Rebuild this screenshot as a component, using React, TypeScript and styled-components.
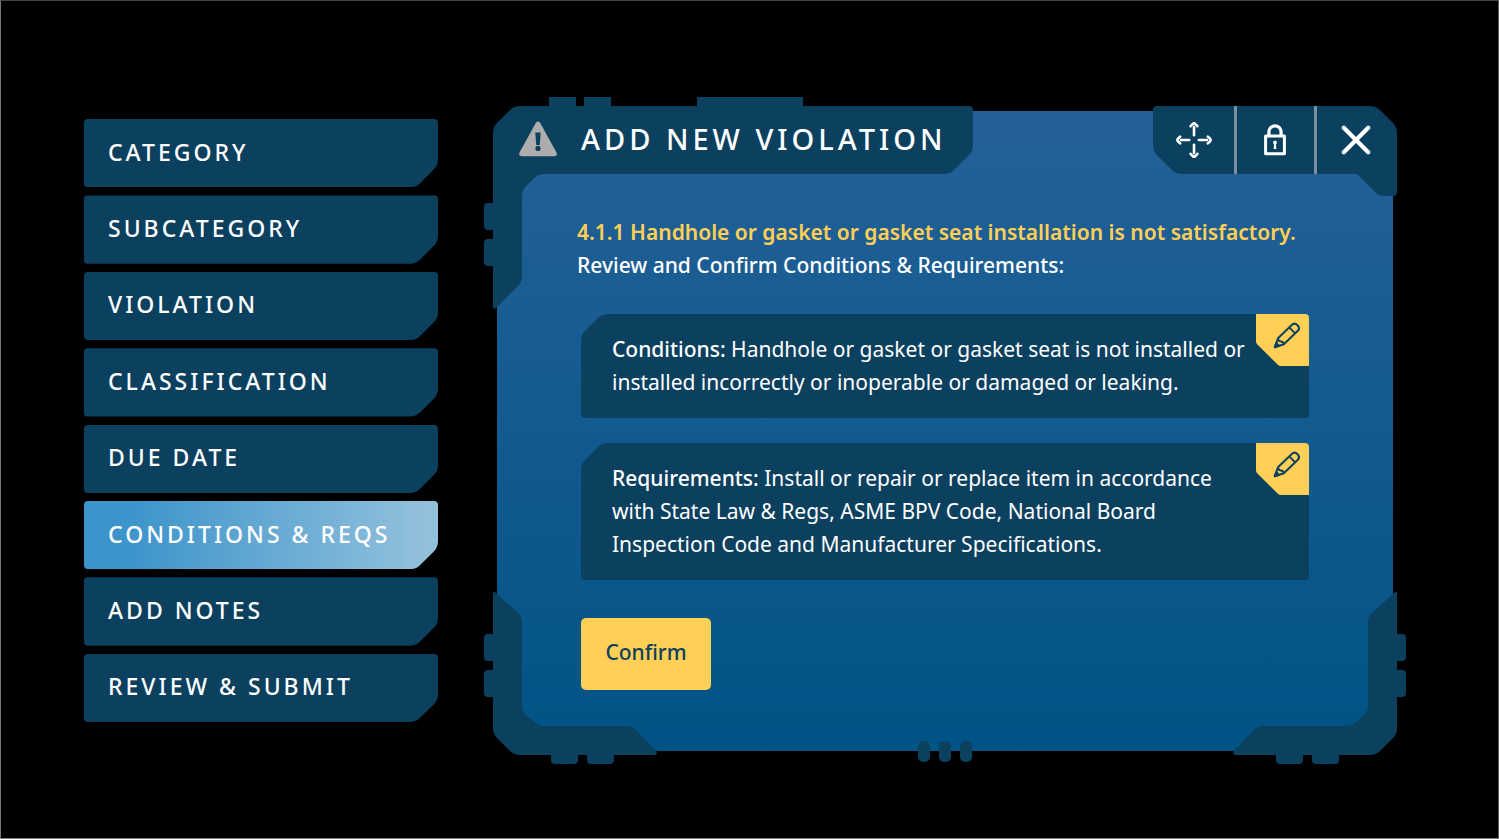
import React from "react";
import styled, { createGlobalStyle, css } from "styled-components";

const NAVY = "#0b405f";
const YELLOW = "#ffcf56";
const FONT = '"Noto Sans", "Open Sans", sans-serif';

/* Clip outlines: each corner is square or bevelled, bevels have softened ends. */
type Bevels = { tl?: number; tr?: number; br?: number; bl?: number; soft?: number };

const fromNear = (n: number) => `${n.toFixed(1)}px`;
const fromFar = (n: number) => `calc(100% - ${n.toFixed(1)}px)`;

function bevelPoints(size: number, soft: number): [number, number][] {
  const s = soft * 0.7;
  const curve = (a: number[], b: number[], c: number[]) =>
    [0, 0.2, 0.4, 0.6, 0.8, 1].map((t): [number, number] => [
      (1 - t) * (1 - t) * a[0] + 2 * t * (1 - t) * b[0] + t * t * c[0],
      (1 - t) * (1 - t) * a[1] + 2 * t * (1 - t) * b[1] + t * t * c[1],
    ]);
  return [
    ...curve([0, size + soft], [0, size], [s, size - s]),
    ...curve([size - s, s], [size, 0], [size + soft, 0]),
  ];
}

function bevel({ tl = 0, tr = 0, br = 0, bl = 0, soft = 6 }: Bevels) {
  const pts = (n: number): [number, number][] => (n ? bevelPoints(n, soft) : [[0, 0]]);
  const list = [
    ...pts(tl).map(([x, y]) => `${fromNear(x)} ${fromNear(y)}`),
    ...pts(tr).reverse().map(([x, y]) => `${fromFar(x)} ${fromNear(y)}`),
    ...pts(br).map(([x, y]) => `${fromFar(x)} ${fromFar(y)}`),
    ...pts(bl).reverse().map(([x, y]) => `${fromNear(x)} ${fromFar(y)}`),
  ];
  return css`
    clip-path: polygon(${list.join(", ")});
  `;
}

const Global = createGlobalStyle`
  *, *::before, *::after { box-sizing: border-box; }
  body { margin: 0; background: #000; font-family: ${FONT}; color: #fff; }
  button { font: inherit; color: inherit; border: 0; padding: 0; cursor: pointer; }
  svg { display: block; }
`;

const Page = styled.div`
  min-height: 100vh;
  display: flex;
  align-items: flex-start;
  gap: 55px;
  padding: 105px 101px 83px 83px;
  border: 1px solid;
  border-color: #444 #5c5c5c #808080 #777;
`;

const Steps = styled.nav`
  flex: 0 0 354px;
  align-self: stretch;
  display: flex;
  flex-direction: column;
  gap: 8px;
  padding: 13px 0 33px;
`;

const Step = styled.button<{ $active?: boolean }>`
  flex: 1;
  min-height: 48px;
  padding: 0 24px 3px;
  text-align: left;
  white-space: nowrap;
  font-size: 23px;
  font-weight: 500;
  letter-spacing: 3px;
  border-radius: 4px;
  background: ${(p) =>
    p.$active ? "linear-gradient(90deg, #3c94cb 12%, #93c1dc 97%)" : NAVY};
  ${bevel({ br: 22 })}
`;

const Dialog = styled.section`
  position: relative;
  isolation: isolate;
  flex: 1;
  min-width: 0;

  &::before {
    content: "";
    position: absolute;
    z-index: -1;
    inset: 5px 4px 4px;
    background: linear-gradient(#246198, #005386);
    ${bevel({ tl: 24, tr: 24, br: 24, bl: 24 })}
  }
`;

const Header = styled.header`
  display: flex;
  justify-content: space-between;
  align-items: flex-start;
`;

const TitlePlate = styled.div`
  display: flex;
  align-items: center;
  gap: 24px;
  height: 68px;
  width: 480px;
  padding: 0 0 2px 26px;
  background: ${NAVY};
  border-radius: 0 4px 0 0;
  ${bevel({ tl: 21, br: 23 })}
`;

const Title = styled.h1`
  margin: 0;
  font-size: 29px;
  line-height: 40px;
  font-weight: 500;
  letter-spacing: 4px;
  white-space: nowrap;
`;

const Tools = styled.div`
  display: grid;
  grid-template-columns: 81px 80px 83px;
  height: 68px;
  background: ${NAVY};
  border-radius: 4px 0 0 0;
  ${bevel({ tr: 21, bl: 23 })}
`;

const Tool = styled.button`
  display: grid;
  place-items: center;
  background: none;

  & + & {
    padding-right: 2px;
    border-left: 3px solid #7890a0;
  }
`;

const Content = styled.div`
  padding: 42px 88px 65px 84px;
  font-size: 21px;
  line-height: 33px;
`;

const Code = styled.h2`
  margin: 0;
  font-size: 21px;
  font-weight: 600;
  color: ${YELLOW};
  white-space: nowrap;
`;

const Lead = styled.p`
  margin: 0;
  font-weight: 500;
`;

const Body = styled.div`
  padding: 32px 0 0 4px;
`;

const Cards = styled.div`
  display: grid;
  grid-template-columns: minmax(0, 1fr);
  gap: 25px;
  margin-bottom: 38px;
`;

const Card = styled.article`
  position: relative;
  padding: 19px 53px 19px 31px;
  background: ${NAVY};
  border-radius: 4px;
  ${bevel({ tl: 21 })}

  p {
    margin: 0;
    white-space: nowrap;
  }

  strong {
    font-weight: 500;
  }
`;

const Edit = styled.button`
  position: absolute;
  top: 0;
  right: 0;
  display: flex;
  justify-content: flex-end;
  align-items: flex-start;
  width: 53px;
  height: 52px;
  padding: 8px 9px 0 0;
  background: ${YELLOW};
  color: ${NAVY};
  border-radius: 0 4px 0 0;
  ${bevel({ bl: 23, soft: 2 })}
`;

const Confirm = styled.button`
  min-width: 130px;
  height: 72px;
  padding: 0 24px 4px;
  background: ${YELLOW};
  color: ${NAVY};
  font-weight: 500;
  border-radius: 5px;
`;

/* Frame ornaments hang over the dialog's corners and edges. */
const Ornament = styled.svg`
  position: absolute;
  pointer-events: none;
  fill: ${NAVY};
`;

const TopLeft = styled(Ornament)`
  left: -9px;
  top: -9px;
`;

const TopRight = styled(Ornament)`
  right: 0;
  top: 67px;
`;

const BottomCorner = styled(Ornament)<{ $side: "left" | "right" }>`
  bottom: -9px;
  ${(p) => p.$side}: -9px;
  ${(p) => p.$side === "right" && "transform: scaleX(-1);"}
`;

const Pills = styled.div`
  position: absolute;
  left: 0;
  right: 0;
  bottom: -7px;
  display: flex;
  justify-content: center;
  gap: 9px;

  i {
    width: 12px;
    height: 21px;
    border-radius: 5px;
    background: ${NAVY};
  }
`;

const WarningIcon = () => (
  <svg width="38" height="36" viewBox="0 0 38 36" aria-hidden="true">
    <path d="M16.9 1.8Q19-.9 21.1 1.8L37.5 31.6Q38.6 35 35.4 35.2H2.6Q-.6 35 .5 31.6Z" fill="#adadad" />
    <path d="M16.3 11.5h5.4l-.9 12.4h-3.6z" fill={NAVY} />
    <circle cx="19" cy="27.4" r="2.6" fill={NAVY} />
  </svg>
);

const MoveIcon = () => (
  <svg width="38" height="38" viewBox="-19 -19 38 38" fill="none" stroke="#fff" strokeWidth="2.6" strokeLinecap="round" strokeLinejoin="round" aria-hidden="true">
    {[0, 90, 180, 270].map((a) => (
      <path key={a} transform={`rotate(${a})`} d="M0-4.8V-13M-3.4-13.8L-1.2-16.2Q0-17.2 1.2-16.2L3.4-13.8" />
    ))}
  </svg>
);

const LockIcon = () => (
  <svg width="22" height="32" viewBox="0 0 22 32" fill="none" stroke="#fff" aria-hidden="true">
    <rect x="1.6" y="12" width="18.8" height="17.8" strokeWidth="3" strokeLinejoin="round" />
    <path d="M4.9 12V8a6.1 6.1 0 0 1 12.2 0v4" strokeWidth="3.2" />
    <path d="M11 16.6a2 2 0 0 1 1 3.7l.3 4.7H9.7l.3-4.7a2 2 0 0 1 1-3.7z" fill="#fff" stroke="none" />
  </svg>
);

const CloseIcon = () => (
  <svg width="30" height="30" viewBox="0 0 30 30" stroke="#fff" strokeWidth="4.2" strokeLinecap="round" aria-hidden="true">
    <path d="M2.8 2.8l24.4 24.4M27.2 2.8L2.8 27.2" />
  </svg>
);

const PencilIcon = () => (
  <svg width="27" height="27" viewBox="0 0 27 27" fill="none" stroke="currentColor" strokeWidth="2" strokeLinejoin="round" aria-hidden="true">
    <g transform="translate(1.8 25.2) rotate(-44)">
      <path d="M0 0L8.5-4.2H27.6Q31.6-4.2 31.6 0T27.6 4.2H8.5ZM8.5-4.2Q6.4-2 8.3 0T8.5 4.2M24.2-4.2V4.2" />
      <path d="M0 0L4-2V2Z" fill="currentColor" />
    </g>
  </svg>
);

const steps = [
  "CATEGORY",
  "SUBCATEGORY",
  "VIOLATION",
  "CLASSIFICATION",
  "DUE DATE",
  "CONDITIONS & REQS",
  "ADD NOTES",
  "REVIEW & SUBMIT",
];

const cornerArt = (
  <>
    <path d="M9 3Q9 0 12 3L34 23Q38 27 38 33V117Q38 121 41 124L50 132Q54 136 60 136H142Q148 136 152 140L172 161Q174 165 171 165H36Q30 165 26 161L13 148Q9 144 9 138Z" />
    <path d="M10 44H4Q0 44 0 48V67Q0 71 4 71H10ZM10 80H4Q0 80 0 84V103Q0 107 4 107H10Z" />
    <path d="M67 164V170Q67 174 71 174H90Q94 174 94 170V164ZM103 164V170Q103 174 107 174H126Q130 174 130 170V164Z" />
  </>
);

export default function App() {
  return (
    <>
      <Global />
      <Page>
        <Steps aria-label="Violation steps">
          {steps.map((s) => {
            const active = s === "CONDITIONS & REQS";
            return (
              <Step key={s} type="button" $active={active} aria-current={active ? "step" : undefined}>
                {s}
              </Step>
            );
          })}
        </Steps>

        <Dialog role="dialog" aria-labelledby="dialog-title">
          <TopLeft width="320" height="214" aria-hidden="true">
            <path d="M65 0H92V10H65ZM100 0H127V10H100ZM213 0H319V10H213Z" />
            <path d="M10 106H4Q0 106 0 110V129Q0 133 4 133H10ZM10 142H4Q0 142 0 146V165Q0 169 4 169H10Z" />
            <path d="M9 40H38V76H60V77Q54 77 50 81L41 90Q38 93 38 98V179Q38 185 34 189L12 211Q9 213 9 210Z" />
            <path d="M37 76H60V77Q54 77 50 81L41 90Q38 93 38 98Z" />
          </TopLeft>
          <TopRight width="40" height="23" aria-hidden="true">
            <path d="M0 0H40V19Q40 23 36 23H26Q22 23 19 20L0 1Z" />
          </TopRight>
          <BottomCorner $side="left" width="174" height="174" aria-hidden="true">
            {cornerArt}
          </BottomCorner>
          <BottomCorner $side="right" width="174" height="174" aria-hidden="true">
            {cornerArt}
          </BottomCorner>
          <Pills aria-hidden="true">
            <i />
            <i />
            <i />
          </Pills>

          <Header>
            <TitlePlate>
              <WarningIcon />
              <Title id="dialog-title">ADD NEW VIOLATION</Title>
            </TitlePlate>
            <Tools>
              <Tool type="button" aria-label="Move">
                <MoveIcon />
              </Tool>
              <Tool type="button" aria-label="Lock">
                <LockIcon />
              </Tool>
              <Tool type="button" aria-label="Close">
                <CloseIcon />
              </Tool>
            </Tools>
          </Header>

          <Content>
            <Code>4.1.1 Handhole or gasket or gasket seat installation is not satisfactory.</Code>
            <Lead>Review and Confirm Conditions &amp; Requirements:</Lead>
            <Body>
              <Cards>
                <Card>
                  <p>
                    <strong>Conditions:</strong> Handhole or gasket or gasket seat is not installed or
                    <br />
                    installed incorrectly or inoperable or damaged or leaking.
                  </p>
                  <Edit type="button" aria-label="Edit conditions">
                    <PencilIcon />
                  </Edit>
                </Card>
                <Card>
                  <p>
                    <strong>Requirements:</strong> Install or repair or replace item in accordance
                    <br />
                    with State Law &amp; Regs, ASME BPV Code, National Board
                    <br />
                    Inspection Code and Manufacturer Specifications.
                  </p>
                  <Edit type="button" aria-label="Edit requirements">
                    <PencilIcon />
                  </Edit>
                </Card>
              </Cards>
              <Confirm type="button">Confirm</Confirm>
            </Body>
          </Content>
        </Dialog>
      </Page>
    </>
  );
}
